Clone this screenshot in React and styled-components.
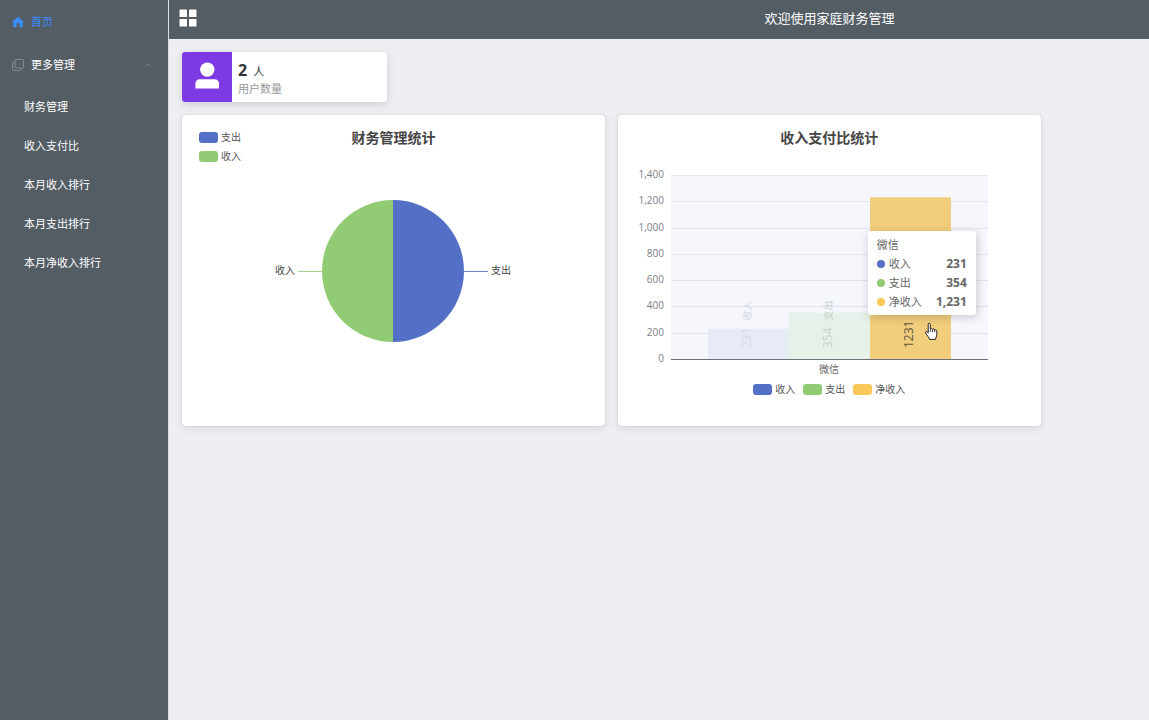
import React from 'react'
import styled, { createGlobalStyle } from 'styled-components'

const GlobalStyle = createGlobalStyle`
  * {
    box-sizing: border-box;
  }
  body {
    margin: 0;
    background: #eeeef3;
    font-family: "Open Sans", "Noto Sans CJK SC", sans-serif;
    color: #333;
  }
  svg text {
    font-family: "Open Sans", "Noto Sans CJK SC", sans-serif;
  }
`

const Page = styled.div`
  display: flex;
  min-height: 100vh;
`
const Sidebar = styled.nav`
  width: 169px;
  flex-shrink: 0;
  background: #545c64;
  border-right: 1px solid #dcdfe6;
`
const MenuLink = styled.a`
  height: 43px;
  padding: 0 12px;
  display: flex;
  align-items: center;
  gap: 7px;
  font-size: 11px;
  line-height: 16px;
  text-decoration: none;
  color: #3a8cff;
`
const MenuButton = styled.button`
  width: 100%;
  height: 44px;
  padding: 0 16px 0 12px;
  display: flex;
  align-items: center;
  gap: 7px;
  border: 0;
  background: none;
  color: #fff;
  font-family: inherit;
  font-size: 11px;
  line-height: 16px;
  text-align: left;
  cursor: pointer;

  span {
    flex: 1;
  }
`
const SubMenu = styled.ul`
  margin: 0;
  padding: 0;
  list-style: none;
`
const SubLink = styled.a`
  height: 39px;
  padding-left: 24px;
  display: flex;
  align-items: center;
  font-size: 11px;
  line-height: 16px;
  text-decoration: none;
  color: #fff;
`
const Content = styled.div`
  flex: 1;
  min-width: 0;
`
const Header = styled.header`
  height: 39px;
  padding: 0 10px 3px;
  display: grid;
  grid-template-columns: 61fr 39fr;
  align-items: center;
  background: #545c64;
  color: #fff;
`
const CollapseButton = styled.button`
  width: 18px;
  height: 18px;
  padding: 0;
  display: flex;
  border: 0;
  background: none;
  cursor: pointer;
`
const HeaderTitle = styled.span`
  font-size: 13px;
  line-height: 20px;
`
const Main = styled.main`
  padding: 13px;
`
const StatCard = styled.section`
  width: 205px;
  height: 50px;
  display: flex;
  overflow: hidden;
  border-radius: 3px;
  background: #fff;
  box-shadow: 0 2px 8px rgba(0, 0, 0, 0.14);
`
const StatIcon = styled.div`
  width: 50px;
  padding: 10px 0 0 13px;
  background: #7d39e3;
`
const StatText = styled.div`
  padding: 8px 6px 0;
`
const StatValue = styled.p`
  margin: 0;
  font-size: 11px;
  line-height: 20px;

  strong {
    margin-right: 6px;
    font-size: 16px;
  }
`
const StatLabel = styled.p`
  margin: 0;
  font-size: 11px;
  line-height: 14px;
  color: #999;
`
const Charts = styled.div`
  width: 90%;
  margin-top: 13px;
  display: grid;
  grid-template-columns: 1fr 1fr;
  gap: 13px;
`
const ChartCard = styled.section`
  min-width: 0;
  border-radius: 3px;
  background: #fff;
  box-shadow: 0 0 1px rgba(0, 0, 0, 0.3), 0 2px 8px rgba(0, 0, 0, 0.1);
`
const ChartHead = styled.div`
  height: 51px;
  padding: 13px 17px 0;
  display: grid;
  grid-template-columns: 1fr auto 1fr;
`
const ChartTitle = styled.h2`
  grid-column: 2;
  margin: 0;
  font-size: 14px;
  line-height: 20px;
  font-weight: bold;
  color: #464646;
`
const Legend = styled.ul`
  margin: 0;
  padding: 0;
  display: flex;
  flex-direction: ${props => (props.$vertical ? 'column' : 'row')};
  justify-content: ${props => (props.$vertical ? 'flex-start' : 'center')};
  gap: ${props => (props.$vertical ? '0' : '8px')};
  list-style: none;
`
const LegendItem = styled.li`
  display: flex;
  align-items: center;
  gap: 3px;
  font-size: 10px;
  line-height: 19px;
  color: #555;

  &::before {
    content: "";
    width: 19px;
    height: 11px;
    border-radius: 3px;
    background: ${props => props.$color};
  }
`
const Drawing = styled.svg`
  display: block;
  width: 100%;
  height: ${props => props.$height}px;
`
const ChartBody = styled.div`
  position: relative;
`
const Tooltip = styled.div`
  position: absolute;
  left: 250px;
  top: 65px;
  width: 108px;
  padding: 4px 9px;
  border-radius: 3px;
  background: #fff;
  box-shadow: 1px 2px 10px rgba(0, 0, 0, 0.2);
  font-size: 11px;
  line-height: 19px;
  color: #666;
`
const TooltipRow = styled.div`
  display: flex;
  align-items: center;

  &::before {
    content: "";
    width: 8px;
    height: 8px;
    margin-right: 4px;
    border-radius: 50%;
    background: ${props => props.$color};
  }
  strong {
    margin-left: auto;
    font-size: 12px;
  }
`
const Cursor = styled.svg`
  position: absolute;
  left: 306px;
  top: 156px;
`

const subItems = ['财务管理', '收入支付比', '本月收入排行', '本月支出排行', '本月净收入排行']

const pieData = [
  { name: '支出', color: '#5470c6' },
  { name: '收入', color: '#91cc75' },
]

const series = [
  { name: '收入', value: 231, color: '#5470c6', fill: '#e7ebf6', text: '#d3d9eb' },
  { name: '支出', value: 354, color: '#91cc75', fill: '#e6f2e9', text: '#c6d3ca' },
  { name: '净收入', value: 1231, color: '#fac858', fill: '#f1ce7c', text: '#5e553c' },
]

// plot area of the bar chart, in svg units
const plot = { left: 53, top: 9, width: 317, height: 184, max: 1400 }
const yOf = value => plot.top + plot.height - (value / plot.max) * plot.height
const ticks = [0, 200, 400, 600, 800, 1000, 1200, 1400]

const HomeIcon = () => (
  <svg width="12" height="12" viewBox="0 0 12 12" fill="#3a8cff">
    <path d="M6 .7 11.6 5.6c.4.4.2.8-.3.8h-.6v4c0 .5-.3.8-.8.8H7.5V8.3a1.5 1.5 0 0 0-3 0v2.9H2.1c-.5 0-.8-.3-.8-.8v-4H.7c-.5 0-.7-.4-.3-.8z" />
  </svg>
)

const CopyIcon = () => (
  <svg width="12" height="12" viewBox="0 0 12 12" fill="none" stroke="#8b9097" strokeWidth="0.9">
    <rect x="3" y="0.5" width="8.5" height="8.5" rx="0.8" />
    <path d="M3 3H1.3a.8.8 0 0 0-.8.8v6.9c0 .5.3.8.8.8h6.9c.5 0 .8-.3.8-.8V9" />
  </svg>
)

const ArrowIcon = () => (
  <svg width="8" height="6" viewBox="0 0 8 6" fill="none" stroke="#82888f" strokeWidth="1">
    <path d="M1.2 4.6 4 1.6l2.8 3" />
  </svg>
)

const GridIcon = () => (
  <svg width="18" height="18" viewBox="0 0 18 18" fill="#fff">
    <rect x="0.5" y="0.5" width="7.5" height="7.5" rx="0.6" />
    <rect x="10" y="0.5" width="7.5" height="7.5" rx="0.6" />
    <rect x="0.5" y="10" width="7.5" height="7.5" rx="0.6" />
    <rect x="10" y="10" width="7.5" height="7.5" rx="0.6" />
  </svg>
)

const UserIcon = () => (
  <svg width="24" height="27" viewBox="0 0 24 27" fill="#fff">
    <circle cx="12.3" cy="7.6" r="7.2" />
    <path d="M.4 26.6v-5.2a4.200 4.200 0 0 1 4.200-4.200h15.200a4.200 4.200 0 0 1 4.200 4.200v5.200z" />
  </svg>
)

const PieChart = () => (
  <ChartCard>
    <ChartHead>
      <Legend $vertical>
        {pieData.map(item => (
          <LegendItem key={item.name} $color={item.color}>{item.name}</LegendItem>
        ))}
      </Legend>
      <ChartTitle>财务管理统计</ChartTitle>
    </ChartHead>
    <Drawing
      $height={260}
      viewBox="0 0 422 260"
      preserveAspectRatio="xMinYMin meet"
      role="img"
      aria-label="财务管理统计"
    >
      <path d="M211 34a71 71 0 0 1 0 142z" fill="#5470c6" />
      <path d="M211 34a71 71 0 0 0 0 142z" fill="#91cc75" />
      <path d="M282 105.5h24" stroke="#7388c6" />
      <path d="M140 105.5h-24" stroke="#a5d291" />
      <text x="309" y="108" fontSize="10" fill="#444">支出</text>
      <text x="113" y="108" fontSize="10" fill="#444" textAnchor="end">收入</text>
    </Drawing>
  </ChartCard>
)

const BarChart = () => {
  const barWidth = 81
  const barLeft = plot.left + 37

  return (
    <ChartCard>
      <ChartHead>
        <ChartTitle>收入支付比统计</ChartTitle>
      </ChartHead>
      <ChartBody>
        <Drawing
          $height={214}
          viewBox="0 0 422 214"
          preserveAspectRatio="xMinYMin meet"
          role="img"
          aria-label="收入支付比统计"
        >
          <rect x={plot.left} y={plot.top} width={plot.width} height={plot.height} fill="#f6f7fc" />
          {ticks.map(tick => (
            <React.Fragment key={tick}>
              <path
                d={`M${plot.left} ${Math.round(yOf(tick)) + 0.5}h${plot.width}`}
                stroke="#e1e5ed"
              />
              <text x="46" y={yOf(tick) + 3} fontSize="10" fill="#7c7e86" textAnchor="end">
                {tick.toLocaleString('en-US')}
              </text>
            </React.Fragment>
          ))}
          {series.map((item, index) => {
            const x = barLeft + index * barWidth
            return (
              <g key={item.name}>
                <rect
                  x={x}
                  y={yOf(item.value)}
                  width={barWidth}
                  height={yOf(0) - yOf(item.value)}
                  fill={item.fill}
                />
                <text
                  transform={`translate(${x + 43} ${yOf(0) - 11}) rotate(-90)`}
                  fontSize="12"
                  fill={item.text}
                >
                  {item.value}
                  <tspan dx="7" fontSize="10">{item.name}</tspan>
                </text>
              </g>
            )
          })}
          <path d={`M${plot.left} ${yOf(0) + 0.5}h${plot.width}`} stroke="#6e7079" />
          <text x="211" y="207" fontSize="10" fill="#666" textAnchor="middle">微信</text>
        </Drawing>
        <Tooltip role="tooltip">
          <div>微信</div>
          {series.map(item => (
            <TooltipRow key={item.name} $color={item.color}>
              {item.name}
              <strong>{item.value.toLocaleString('en-US')}</strong>
            </TooltipRow>
          ))}
        </Tooltip>
        <Cursor width="15" height="19" viewBox="0 0 15 19">
          <path
            d="M5 1.2c.8 0 1.3.6 1.3 1.4v4.2c.3-.6 2-.5 2.2.5.5-.7 2-.4 2.2.6.7-.5 2.1-.1 2.1 1.2v3.4c0 2-1 2.8-1.4 4.9H5.6c-.4-1.8-2.5-3.8-3.9-6.3-.7-1.3.7-2.1 1.5-1.2l1 1.2V2.6c0-.8.1-1.4.8-1.4z"
            fill="#fff"
            stroke="#222"
            strokeWidth="1"
            strokeLinejoin="round"
          />
          <path d="M6.3 6.8v3M8.500 7.300v2.700M10.700 8v2.200" stroke="#222" strokeWidth="0.9" />
        </Cursor>
      </ChartBody>
      <Legend>
        {series.map(item => (
          <LegendItem key={item.name} $color={item.color}>{item.name}</LegendItem>
        ))}
      </Legend>
    </ChartCard>
  )
}

const App = () => {
  const [open, setOpen] = React.useState(true)

  return (
    <Page>
      <GlobalStyle />
      <Sidebar>
        <MenuLink href="#home">
          <HomeIcon />
          首页
        </MenuLink>
        <MenuButton type="button" aria-expanded={open} onClick={() => setOpen(!open)}>
          <CopyIcon />
          <span>更多管理</span>
          <ArrowIcon />
        </MenuButton>
        {open && (
          <SubMenu>
            {subItems.map((item, index) => (
              <li key={item}>
                <SubLink href={`#menu-${index}`}>{item}</SubLink>
              </li>
            ))}
          </SubMenu>
        )}
      </Sidebar>
      <Content>
        <Header>
          <CollapseButton type="button" aria-label="菜单">
            <GridIcon />
          </CollapseButton>
          <HeaderTitle>欢迎使用家庭财务管理</HeaderTitle>
        </Header>
        <Main>
          <StatCard>
            <StatIcon>
              <UserIcon />
            </StatIcon>
            <StatText>
              <StatValue><strong>2</strong>人</StatValue>
              <StatLabel>用户数量</StatLabel>
            </StatText>
          </StatCard>
          <Charts>
            <PieChart />
            <BarChart />
          </Charts>
        </Main>
      </Content>
    </Page>
  )
}

export default App
